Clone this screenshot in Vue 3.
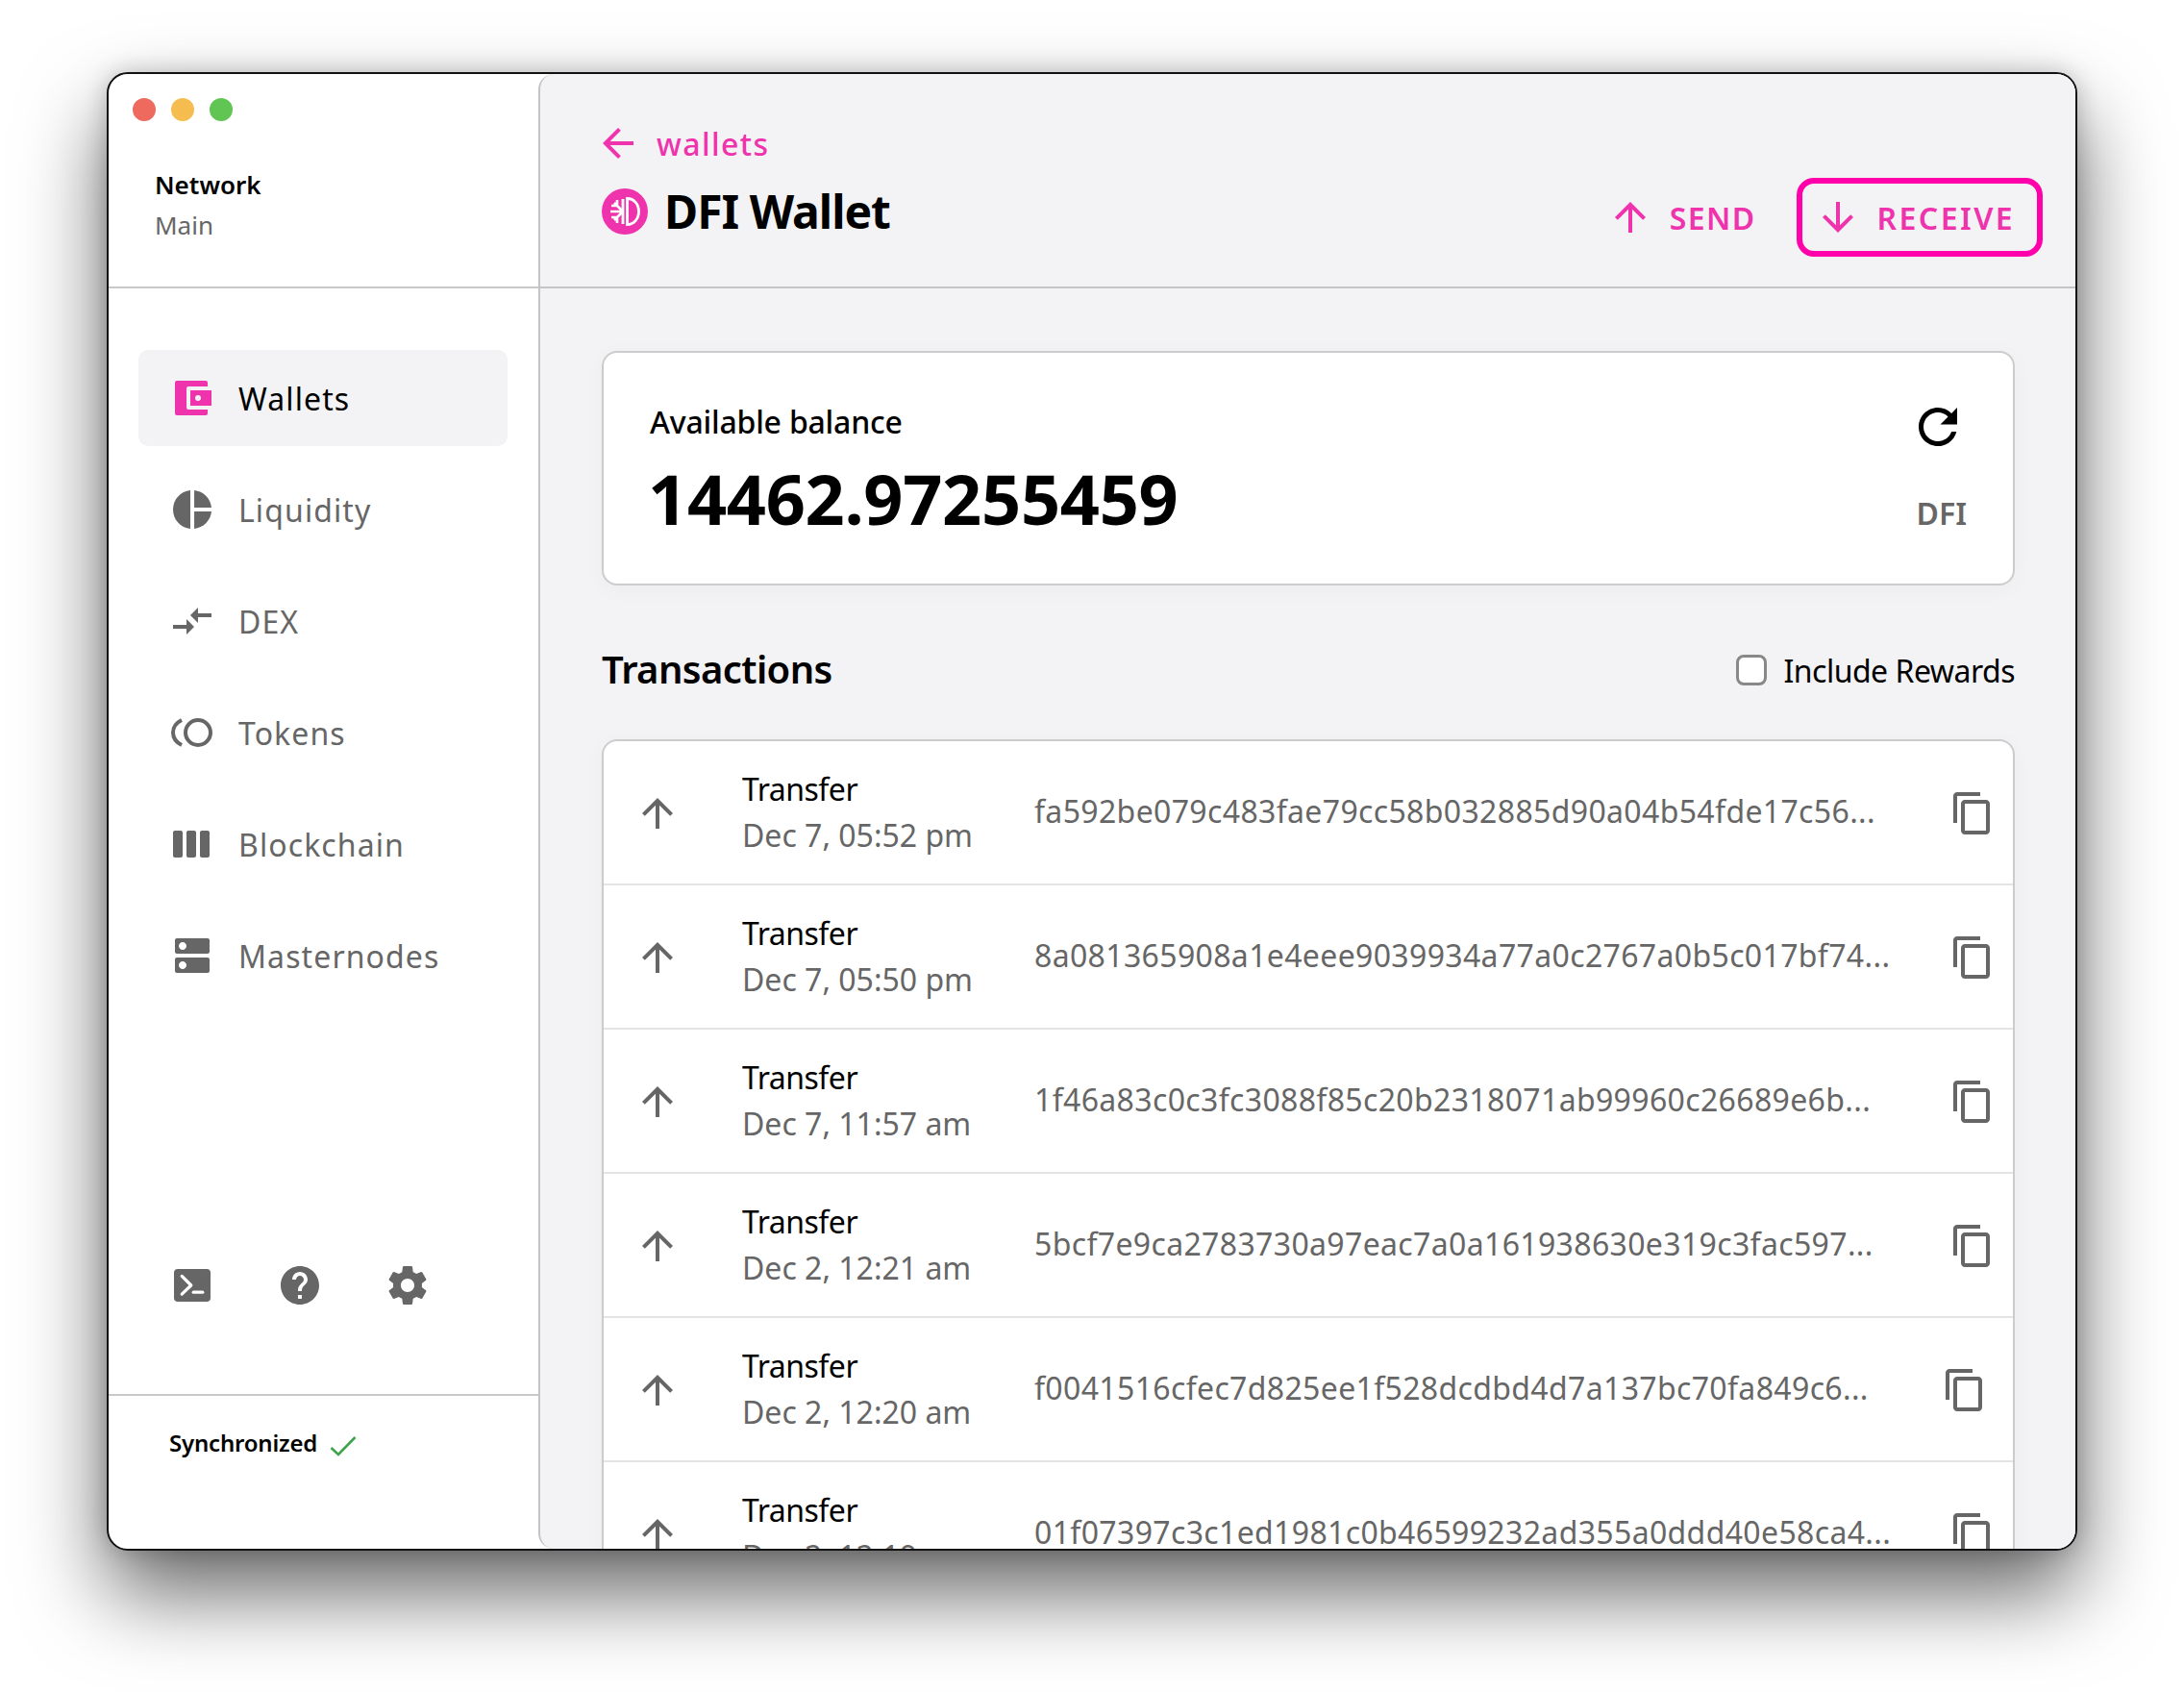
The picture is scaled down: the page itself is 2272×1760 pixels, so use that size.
<template>
	<div class="page">
		<div class="window">
			<aside class="sidebar">
				<div class="sidebar__top">
					<div class="traffic">
						<span class="traffic__dot red"></span>
						<span class="traffic__dot yellow"></span>
						<span class="traffic__dot green"></span>
					</div>
					<div class="network">Network</div>
					<div class="network-name">Main</div>
				</div>

				<nav class="nav">
					<div v-for="item in navItems" :key="item.label" class="nav__item" :class="{ active: item.active }">
						<svg v-if="item.icon === 'wallet'" class="nav__icon" viewBox="0 0 48 48">
							<path fill="#ee33ac" fill-rule="evenodd" d="M8 6h30a2 2 0 0 1 2 2v4H20a2 2 0 0 0-2 2v20a2 2 0 0 0 2 2h20v4a2 2 0 0 1-2 2H8a2 2 0 0 1-2-2V8a2 2 0 0 1 2-2z" />
							<path fill="#ee33ac" fill-rule="evenodd" d="M22 16h22v16H22zM30 21a3 3 0 1 0 0 6 3 3 0 0 0 0-6z" />
						</svg>
						<svg v-else-if="item.icon === 'tokens'" class="nav__icon" viewBox="0 0 48 48">
							<circle cx="30" cy="24" r="13" fill="none" stroke="#666" stroke-width="4" />
							<path fill="none" stroke="#666" stroke-width="4" d="M13 11C7 14 4 19 4 24s3 10 9 13" />
						</svg>
						<svg v-else class="nav__icon" viewBox="0 0 24 24">
							<path fill="#666" :d="item.path" />
						</svg>
						<span>{{ item.label }}</span>
					</div>
				</nav>

				<div class="tools">
					<svg class="tool" viewBox="0 0 24 24">
						<rect x="2.5" y="3.5" width="19" height="17" rx="2" fill="#666" />
						<path d="M6.6 7.2l4.8 4.8-4.8 4.6" fill="none" stroke="#fff" stroke-width="1.6" stroke-linecap="round" stroke-linejoin="round" />
						<path d="M12.6 15.6h4.8" fill="none" stroke="#fff" stroke-width="1.6" stroke-linecap="round" />
					</svg>
					<svg class="tool" viewBox="0 0 24 24">
						<path fill="#666" d="M12 2C6.48 2 2 6.48 2 12s4.48 10 10 10 10-4.48 10-10S17.52 2 12 2zm1 17h-2v-2h2v2zm2.07-7.75l-.9.92C13.45 12.9 13 13.5 13 15h-2v-.5c0-1.1.45-2.1 1.17-2.83l1.24-1.26c.37-.36.59-.86.59-1.41 0-1.1-.9-2-2-2s-2 .9-2 2H8c0-2.21 1.79-4 4-4s4 1.79 4 4c0 .88-.36 1.68-.93 2.25z" />
					</svg>
					<svg class="tool" viewBox="0 0 24 24">
						<path fill="#666" d="M19.43 12.98c.04-.32.07-.64.07-.98s-.03-.66-.07-.98l2.11-1.65c.19-.15.24-.42.12-.64l-2-3.46c-.12-.22-.39-.3-.61-.22l-2.49 1c-.52-.4-1.08-.73-1.69-.98l-.38-2.65C14.46 2.18 14.25 2 14 2h-4c-.25 0-.46.18-.49.42l-.38 2.65c-.61.25-1.17.59-1.69.98l-2.49-1c-.23-.09-.49 0-.61.22l-2 3.46c-.13.22-.07.49.12.64l2.11 1.65c-.04.32-.07.65-.07.98s.03.66.07.98l-2.11 1.65c-.19.15-.24.42-.12.64l2 3.46c.12.22.39.3.61.22l2.49-1c.52.4 1.08.73 1.69.98l.38 2.65c.03.24.24.42.49.42h4c.25 0 .46-.18.49-.42l.38-2.65c.61-.25 1.17-.59 1.69-.98l2.49 1c.23.09.49 0 .61-.22l2-3.46c.12-.22.07-.49-.12-.64l-2.11-1.65zM12 15.5c-1.93 0-3.5-1.57-3.5-3.5s1.57-3.5 3.5-3.5 3.5 1.57 3.5 3.5-1.57 3.5-3.5 3.5z" />
					</svg>
				</div>

				<div class="sync">
					<span>Synchronized</span>
					<svg class="sync__check" viewBox="0 0 28 22">
						<path d="M1.5 13l7.5 7L26.5 2" fill="none" stroke="#3fa34d" stroke-width="2.6" />
					</svg>
				</div>
			</aside>

			<main class="main">
				<header class="header">
					<div class="header__left">
						<div class="back">
							<svg class="back__icon" viewBox="0 0 24 24">
								<path fill="#ee33ac" d="M20 11H7.83l5.59-5.59L12 4l-8 8 8 8 1.41-1.41L7.83 13H20v-2z" />
							</svg>
							<span>wallets</span>
						</div>
						<div class="title">
							<svg class="title__logo" viewBox="0 0 48 48">
								<circle cx="24" cy="24" r="24" fill="#ee33ac" />
								<path d="M26.5 10.5c7 0 12 6 12 13.5s-5 13.5-12 13.5zM22 11v26" fill="none" stroke="#fff" stroke-width="2.8" />
								<path d="M22 24H9M22 24l-9-9M22 24l-9 9M16 12v6H10M16 36v-6H10" fill="none" stroke="#fff" stroke-width="2.6" />
							</svg>
							<h1>DFI Wallet</h1>
						</div>
					</div>
					<div class="actions">
						<div class="action action--plain">
							<svg class="action__icon" viewBox="0 0 24 24">
								<path fill="#ee33ac" d="M4 12l1.41 1.41L11 7.83V20h2V7.83l5.58 5.59L20 12l-8-8-8 8z" />
							</svg>
							<span>SEND</span>
						</div>
						<div class="action action--outlined">
							<svg class="action__icon" viewBox="0 0 24 24">
								<path fill="#ee33ac" d="M20 12l-1.41-1.41L13 16.17V4h-2v12.17l-5.58-5.59L4 12l8 8 8-8z" />
							</svg>
							<span>RECEIVE</span>
						</div>
					</div>
				</header>

				<div class="content">
					<section class="balance">
						<div>
							<div class="balance__label">Available balance</div>
							<div class="balance__amount">14462.97255459</div>
						</div>
						<div class="balance__side">
							<svg class="balance__refresh" viewBox="0 0 24 24">
								<path fill="#000" d="M17.65 6.35C16.2 4.9 14.21 4 12 4c-4.42 0-7.99 3.58-7.99 8s3.57 8 7.99 8c3.73 0 6.84-2.55 7.73-6h-2.08c-.82 2.33-3.04 4-5.65 4-3.31 0-6-2.69-6-6s2.69-6 6-6c1.66 0 3.14.69 4.22 1.78L13 11h7V4l-2.35 2.35z" />
							</svg>
							<div class="balance__unit">DFI</div>
						</div>
					</section>

					<div class="tx-head">
						<h2>Transactions</h2>
						<label class="rewards">
							<span class="rewards__box"></span>
							<span>Include Rewards</span>
						</label>
					</div>

					<section class="tx-list">
						<div v-for="tx in transactions" :key="tx.hash" class="tx">
							<svg class="tx__icon" viewBox="0 0 24 24">
								<path fill="#666" d="M4 12l1.41 1.41L11 7.83V20h2V7.83l5.58 5.59L20 12l-8-8-8 8z" />
							</svg>
							<div class="tx__info">
								<div class="tx__type">Transfer</div>
								<div class="tx__date">{{ tx.date }}</div>
							</div>
							<div class="tx__hash">{{ tx.hash }}</div>
							<svg class="tx__copy" :class="{ shifted: tx.shifted }" viewBox="0 0 24 24">
								<path fill="#666" d="M16 1H4c-1.1 0-2 .9-2 2v14h2V3h12V1zm3 4H8c-1.1 0-2 .9-2 2v14c0 1.1.9 2 2 2h11c1.1 0 2-.9 2-2V7c0-1.1-.9-2-2-2zm0 16H8V7h11v14z" />
							</svg>
						</div>
					</section>
				</div>
			</main>
		</div>
	</div>
</template>

<script setup>
	const navItems = [
		{ label: "Wallets", icon: "wallet", active: true },
		{ label: "Liquidity", path: "M11 2v20c-5.07-.5-9-4.79-9-10s3.93-9.5 9-10zm2.03 0v8.99H22c-.47-4.74-4.24-8.52-8.97-8.99zm0 11.01V22c4.74-.47 8.5-4.25 8.97-8.99h-8.97z" },
		{ label: "DEX", path: "M9.01 14H2v2h7.01v3L13 15l-3.99-4v3zm5.98-1v-3H22V8h-7.01V5L11 9l3.99 4z" },
		{ label: "Tokens", icon: "tokens" },
		{ label: "Blockchain", path: "M6 5H3c-.55 0-1 .45-1 1v12c0 .55.45 1 1 1h3c.55 0 1-.45 1-1V6c0-.55-.45-1-1-1zm14 0h-3c-.55 0-1 .45-1 1v12c0 .55.45 1 1 1h3c.55 0 1-.45 1-1V6c0-.55-.45-1-1-1zm-7 0h-3c-.55 0-1 .45-1 1v12c0 .55.45 1 1 1h3c.55 0 1-.45 1-1V6c0-.55-.45-1-1-1z" },
		{ label: "Masternodes", path: "M20 13H4c-.55 0-1 .45-1 1v6c0 .55.45 1 1 1h16c.55 0 1-.45 1-1v-6c0-.55-.45-1-1-1zM7 19c-1.1 0-2-.9-2-2s.9-2 2-2 2 .9 2 2-.9 2-2 2zM20 3H4c-.55 0-1 .45-1 1v6c0 .55.45 1 1 1h16c.55 0 1-.45 1-1V4c0-.55-.45-1-1-1zM7 9c-1.1 0-2-.9-2-2s.9-2 2-2 2 .9 2 2-.9 2-2 2z" },
	];

	const transactions = [
		{ date: "Dec 7, 05:52 pm", hash: "fa592be079c483fae79cc58b032885d90a04b54fde17c56..." },
		{ date: "Dec 7, 05:50 pm", hash: "8a081365908a1e4eee9039934a77a0c2767a0b5c017bf74..." },
		{ date: "Dec 7, 11:57 am", hash: "1f46a83c0c3fc3088f85c20b2318071ab99960c26689e6b..." },
		{ date: "Dec 2, 12:21 am", hash: "5bcf7e9ca2783730a97eac7a0a161938630e319c3fac597..." },
		{ date: "Dec 2, 12:20 am", hash: "f0041516cfec7d825ee1f528dcdbd4d7a137bc70fa849c6...", shifted: true },
		{ date: "Dec 2, 12:19 am", hash: "01f07397c3c1ed1981c0b46599232ad355a0ddd40e58ca4..." },
	];
</script>

<style>
	html,
	body {
		background: #fff;
	}
</style>

<style scoped>
	.page {
		height: 1760px;
		padding-top: 75px;
		box-sizing: border-box;
		display: flex;
		justify-content: center;
		overflow: hidden;
		font-family: "Noto Sans", sans-serif;
		color: #000;
	}

	.window {
		width: 2050px;
		height: 1538px;
		box-sizing: border-box;
		display: flex;
		background: #fff;
		border: 2px solid #111;
		border-radius: 22px;
		overflow: hidden;
		box-shadow: 0 44px 88px rgba(0, 0, 0, 0.6), 0 0 24px rgba(0, 0, 0, 0.2);
	}

	.sidebar {
		width: 447px;
		flex: none;
		display: flex;
		flex-direction: column;
	}

	.sidebar__top {
		height: 223px;
		flex: none;
		box-sizing: border-box;
		padding: 25px 0 0 48px;
		border-bottom: 2px solid #c8c8c8;
	}

	.traffic {
		display: flex;
		gap: 16px;
		margin-left: -23px;
	}

	.traffic__dot {
		width: 24px;
		height: 24px;
		border-radius: 50%;
	}

	.red {
		background: #ee6a5f;
	}

	.yellow {
		background: #f5bd4f;
	}

	.green {
		background: #61c554;
	}

	.network {
		margin-top: 45px;
		font-size: 26px;
		line-height: 42px;
		font-weight: 600;
	}

	.network-name {
		font-size: 26px;
		line-height: 42px;
		color: #666;
	}

	.nav {
		margin-top: 64px;
		padding: 0 32px 0 31px;
		display: flex;
		flex-direction: column;
		gap: 16px;
	}

	.nav__item {
		height: 100px;
		padding-left: 32px;
		display: flex;
		align-items: center;
		gap: 24px;
		border-radius: 10px;
		font-size: 32px;
		letter-spacing: 1.1px;
		color: #666;
	}

	.nav__item.active {
		background: #f3f3f6;
		color: #000;
	}

	.nav__icon {
		width: 48px;
		height: 48px;
	}

	.tools {
		margin-top: auto;
		padding: 0 0 89px 63px;
		display: flex;
		gap: 64px;
	}

	.tool {
		width: 48px;
		height: 48px;
	}

	.sync {
		height: 161px;
		flex: none;
		box-sizing: border-box;
		padding: 31px 0 0 63px;
		border-top: 2px solid #c8c8c8;
		display: flex;
		align-items: flex-start;
		gap: 13px;
		font-size: 24px;
		line-height: 36px;
		font-weight: 600;
		letter-spacing: -0.2px;
	}

	.sync__check {
		width: 28px;
		height: 22px;
		margin-top: 10px;
	}

	.main {
		flex: 1;
		min-width: 0;
		display: flex;
		flex-direction: column;
		background: #f3f3f6;
		border-left: 2px solid #c4c4c4;
		border-radius: 16px 0 0 16px;
	}

	.header {
		height: 223px;
		flex: none;
		box-sizing: border-box;
		padding: 48px 34px 31px 65px;
		border-bottom: 2px solid #c4c4c4;
		display: flex;
		justify-content: space-between;
		align-items: flex-end;
	}

	.header__left {
		align-self: flex-start;
	}

	.back {
		height: 48px;
		display: flex;
		align-items: center;
		gap: 16px;
		font-size: 32px;
		letter-spacing: 1.4px;
		font-weight: 500;
		color: #ee33ac;
	}

	.back__icon {
		width: 48px;
		height: 48px;
		margin-left: -8px;
	}

	.title {
		margin-top: 17px;
		height: 60px;
		display: flex;
		align-items: center;
		gap: 17px;
	}

	.title__logo {
		width: 48px;
		height: 48px;
		margin-left: -1px;
	}

	.title h1 {
		margin: -2px 0 0;
		font-size: 48px;
		font-weight: 700;
		letter-spacing: -1px;
	}

	.actions {
		display: flex;
		align-items: center;
		gap: 42px;
	}

	.action {
		display: flex;
		align-items: center;
		gap: 17px;
		font-size: 32px;
		font-weight: 600;
		letter-spacing: 2.4px;
		color: #ee33ac;
	}

	.action--plain {
		letter-spacing: 1.4px;
	}

	.action--outlined {
		height: 82px;
		box-sizing: border-box;
		padding: 0 23px 0 13px;
		border: 6px solid #ff00aa;
		border-radius: 18px;
	}

	.action__icon {
		width: 48px;
		height: 48px;
	}

	.content {
		flex: 1;
		min-height: 0;
		overflow: hidden;
		padding: 65px 63px 0 64px;
	}

	.balance {
		height: 244px;
		box-sizing: border-box;
		padding: 47px 48px 0;
		display: flex;
		justify-content: space-between;
		background: #fff;
		border: 2px solid #ccc;
		border-radius: 16px;
		box-shadow: 0 4px 24px rgba(0, 0, 0, 0.03);
	}

	.balance__label {
		margin-top: 3px;
		font-size: 32px;
		line-height: 44px;
		font-weight: 500;
		letter-spacing: -0.2px;
	}

	.balance__amount {
		margin: 15px 0 0 -2px;
		font-size: 72px;
		line-height: 84px;
		font-weight: 700;
		letter-spacing: -0.3px;
	}

	.balance__side {
		display: flex;
		flex-direction: column;
		align-items: flex-end;
	}

	.balance__refresh {
		width: 60px;
		height: 60px;
	}

	.balance__unit {
		margin-top: 40px;
		font-size: 32px;
		line-height: 40px;
		font-weight: 600;
		color: #666;
	}

	.tx-head {
		height: 60px;
		margin: 58px 0 42px;
		display: flex;
		justify-content: space-between;
		align-items: center;
	}

	.tx-head h2 {
		margin: -3px 0 0;
		font-size: 40px;
		font-weight: 600;
		letter-spacing: -0.6px;
	}

	.rewards {
		display: flex;
		align-items: center;
		gap: 17px;
		font-size: 32px;
		letter-spacing: -0.5px;
	}

	.rewards__box {
		width: 32px;
		height: 32px;
		box-sizing: border-box;
		border: 3px solid #888;
		border-radius: 8px;
		background: #fff;
	}

	.tx-list {
		background: #fff;
		border: 2px solid #ccc;
		border-radius: 16px;
		box-shadow: 0 4px 24px rgba(0, 0, 0, 0.03);
	}

	.tx {
		height: 150px;
		box-sizing: border-box;
		padding: 0 18px 0 32px;
		display: flex;
		align-items: center;
		border-bottom: 2px solid #e4e4e4;
	}

	.tx__icon {
		width: 48px;
		height: 48px;
		margin-top: 2px;
		flex: none;
	}

	.tx__info {
		width: 304px;
		margin-left: 64px;
		flex: none;
		font-size: 32px;
		line-height: 48px;
	}

	.tx__type {
		letter-spacing: -0.5px;
	}

	.tx__date {
		color: #666;
	}

	.tx__hash {
		flex: 1;
		margin-top: -3px;
		font-size: 32px;
		letter-spacing: 0.35px;
		color: #666;
		white-space: nowrap;
	}

	.tx__copy {
		width: 48px;
		height: 48px;
		margin-top: 2px;
		flex: none;
	}

	.tx__copy.shifted {
		margin-right: 8px;
	}
</style>
